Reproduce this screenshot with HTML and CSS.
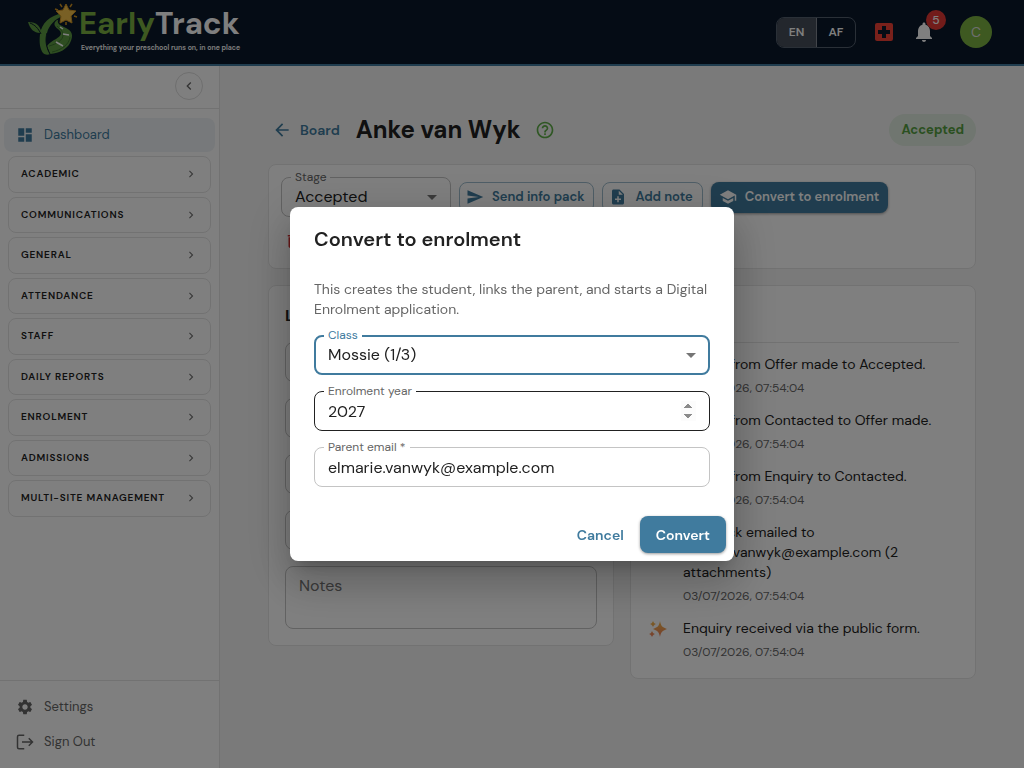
FILE: index.html
```html
<!DOCTYPE html>
<html lang="en">
<head>
  <meta charset="UTF-8">
  <meta name="viewport" content="width=device-width, initial-scale=1.0">
  <title>EarlyTrack - Anke van Wyk</title>
  <link rel="stylesheet" href="styles.css">
</head>
<body>
  <header class="topbar">
    <a class="logo" href="#" aria-label="EarlyTrack">
      <svg width="216" height="60" viewBox="0 0 216 60">
        <path d="M35 11C21 14 14 21 12 32c-1 9 0 15 3 19 2 2 5 2 7 1-4-6-5-14-3-21 2-8 8-14 16-17z" fill="#5c9b42"/>
        <path d="M14 34C13 24 9 20 0 20c2 7 6 11 12 11" fill="#5c9b42"/>
        <path d="M2 21c5 2 8 5 11 11" fill="none" stroke="#0a182a"/>
        <path d="M29 18c-4 3-3 6 1 9 5 4 3 7-2 10-4 2-7 4-9 7l3 8c10-1 17-5 20-11 4-8 2-12-4-15-6-3-9-4-8-8z" fill="#5c9b42"/>
        <path d="M19 31c-2 7-1 14 3 21" fill="none" stroke="#0a182a"/>
        <path d="M21 44c8-2 14-6 14-11 0-4-3-6-6-9M24 50c9-2 17-7 18-15" fill="none" stroke="#3c7430"/>
        <path d="M32 25l3 2M35 32l6 1M28 40l7 4" stroke="#fff" stroke-width="1.500"/>
        <path d="M38 2l3 6 7 1-5 5 1 7-6-3-6 3 1-7-5-5 7-1z" fill="#f3c04b" stroke="#cf9322"/>
        <path d="M32 2l2 3M44 2l-2 3M27 7l3 1M46 14l3 1M38 20l0 3" stroke="#cf9322" stroke-width="1.500"/>
        <text class="logo-name" x="51" y="32"><tspan fill="#7cb342">Early</tspan><tspan fill="#fff">Track</tspan></text>
        <text class="logo-tagline" x="53" y="48">Everything your preschool runs on, in one place</text>
      </svg>
    </a>
    <div class="topbar-actions">
      <div class="lang-switch">
        <button type="button" class="active">EN</button>
        <button type="button">AF</button>
      </div>
      <button type="button" class="icon-button" aria-label="Emergency">
        <svg width="24" height="24" viewBox="0 0 24 24" fill="#f44336"><path d="M19 3H5a2 2 0 0 0-2 2v14c0 1.100.9 2 2 2h14a2 2 0 0 0 2-2V5a2 2 0 0 0-2-2zm-1 11h-4v4h-4v-4H6v-4h4V6h4v4h4v4z"/></svg>
      </button>
      <button type="button" class="icon-button bell" aria-label="Notifications">
        <svg width="24" height="24" viewBox="0 0 24 24" fill="#fff"><path d="M12 22c1.100 0 2-.9 2-2h-4c0 1.100.89 2 2 2zm6-6v-5c0-3.070-1.640-5.640-4.500-6.320V4c0-.83-.67-1.500-1.500-1.500s-1.500.67-1.500 1.500v.68C7.630 5.360 6 7.920 6 11v5l-2 2v1h16v-1l-2-2z"/></svg>
        <span class="badge">5</span>
      </button>
      <button type="button" class="avatar">C</button>
    </div>
  </header>

  <div class="layout">
    <nav class="sidebar">
      <div class="sidebar-top">
        <button type="button" class="collapse" aria-label="Collapse menu">
          <svg width="16" height="16" viewBox="0 0 24 24" fill="currentColor"><path d="M15.410 7.410 14 6l-6 6 6 6 1.410-1.410L10.830 12z"/></svg>
        </button>
      </div>
      <a class="nav-link current" href="#">
        <svg width="18" height="18" viewBox="0 0 24 24" fill="currentColor"><path d="M3 13h8V3H3v10zm0 8h8v-6H3v6zm10 0h8V11h-8v10zm0-18v6h8V3h-8z"/></svg>
        Dashboard
      </a>
      <div class="nav-groups">
        <button type="button" class="nav-group">Academic<svg class="chevron" viewBox="0 0 24 24"><path d="M10 6 8.590 7.410 13.170 12l-4.580 4.590L10 18l6-6z"/></svg></button>
        <button type="button" class="nav-group">Communications<svg class="chevron" viewBox="0 0 24 24"><path d="M10 6 8.590 7.410 13.170 12l-4.580 4.590L10 18l6-6z"/></svg></button>
        <button type="button" class="nav-group">General<svg class="chevron" viewBox="0 0 24 24"><path d="M10 6 8.590 7.410 13.170 12l-4.580 4.590L10 18l6-6z"/></svg></button>
        <button type="button" class="nav-group">Attendance<svg class="chevron" viewBox="0 0 24 24"><path d="M10 6 8.590 7.410 13.170 12l-4.580 4.590L10 18l6-6z"/></svg></button>
        <button type="button" class="nav-group">Staff<svg class="chevron" viewBox="0 0 24 24"><path d="M10 6 8.590 7.410 13.170 12l-4.580 4.590L10 18l6-6z"/></svg></button>
        <button type="button" class="nav-group">Daily Reports<svg class="chevron" viewBox="0 0 24 24"><path d="M10 6 8.590 7.410 13.170 12l-4.580 4.590L10 18l6-6z"/></svg></button>
        <button type="button" class="nav-group">Enrolment<svg class="chevron" viewBox="0 0 24 24"><path d="M10 6 8.590 7.410 13.170 12l-4.580 4.590L10 18l6-6z"/></svg></button>
        <button type="button" class="nav-group">Admissions<svg class="chevron" viewBox="0 0 24 24"><path d="M10 6 8.590 7.410 13.170 12l-4.580 4.590L10 18l6-6z"/></svg></button>
        <button type="button" class="nav-group">Multi-site Management<svg class="chevron" viewBox="0 0 24 24"><path d="M10 6 8.590 7.410 13.170 12l-4.580 4.590L10 18l6-6z"/></svg></button>
      </div>
      <div class="sidebar-bottom">
        <a class="nav-link" href="#">
          <svg width="18" height="18" viewBox="0 0 24 24" fill="currentColor"><path d="M19.140 12.940c.04-.3.06-.61.06-.94 0-.32-.02-.64-.07-.94l2.030-1.580c.18-.14.23-.41.12-.61l-1.920-3.320c-.12-.22-.37-.29-.59-.22l-2.390.96c-.5-.38-1.030-.7-1.620-.94l-.36-2.540c-.04-.24-.24-.41-.48-.41h-3.840c-.24 0-.43.17-.47.41l-.36 2.540c-.59.24-1.130.57-1.620.94l-2.390-.96c-.22-.08-.47 0-.59.22L2.740 8.870c-.12.21-.08.47.12.61l2.030 1.580c-.05.3-.09.63-.09.94s.02.64.07.94l-2.030 1.580c-.18.14-.23.41-.12.61l1.920 3.320c.12.22.37.29.59.22l2.390-.96c.5.38 1.030.7 1.620.94l.36 2.540c.05.24.24.41.48.41h3.840c.24 0 .44-.17.47-.41l.36-2.540c.59-.24 1.130-.56 1.620-.94l2.390.96c.22.08.47 0 .59-.22l1.920-3.320c.12-.22.07-.47-.12-.61l-2.010-1.580zM12 15.600c-1.980 0-3.600-1.620-3.600-3.600s1.620-3.600 3.600-3.600 3.600 1.620 3.600 3.600-1.620 3.600-3.600 3.600z"/></svg>
          Settings
        </a>
        <a class="nav-link" href="#">
          <svg width="18" height="18" viewBox="0 0 24 24" fill="none" stroke="currentColor" stroke-width="2"><path d="M11 3H4a2 2 0 0 0-2 2v14a2 2 0 0 0 2 2h7M8 12h13M17 7l5 5-5 5"/></svg>
          Sign Out
        </a>
      </div>
    </nav>

    <main class="content">
      <div class="page-head">
        <a class="back" href="#">
          <svg width="20" height="20" viewBox="0 0 24 24" fill="currentColor"><path d="M20 11H7.830l5.590-5.590L12 4l-8 8 8 8 1.410-1.410L7.830 13H20v-2z"/></svg>
          Board
        </a>
        <h1>Anke van Wyk</h1>
        <button type="button" class="icon-button help" aria-label="Help">
          <svg width="20" height="20" viewBox="0 0 24 24" fill="currentColor"><path d="M11 18h2v-2h-2v2zm1-16C6.480 2 2 6.480 2 12s4.480 10 10 10 10-4.480 10-10S17.520 2 12 2zm0 18c-4.410 0-8-3.590-8-8s3.590-8 8-8 8 3.590 8 8-3.590 8-8 8zm0-14c-2.210 0-4 1.790-4 4h2c0-1.100.9-2 2-2s2 .9 2 2c0 2-3 1.750-3 5h2c0-2.250 3-2.500 3-5 0-2.210-1.790-4-4-4z"/></svg>
        </button>
        <span class="status">Accepted</span>
      </div>

      <section class="card toolbar">
        <div class="field stage">
          <label for="stage">Stage</label>
          <select id="stage"><option>Accepted</option></select>
          <svg class="caret" viewBox="0 0 24 24"><path d="m7 10 5 5 5-5z"/></svg>
        </div>
        <button type="button" class="btn outlined">
          <svg width="18" height="18" viewBox="0 0 24 24" fill="currentColor"><path d="M2.010 21 23 12 2.010 3 2 10l15 2-15 2z"/></svg>
          Send info pack
        </button>
        <button type="button" class="btn outlined">
          <svg width="18" height="18" viewBox="0 0 24 24" fill="currentColor"><path d="M14 2H6c-1.100 0-2 .9-2 2v16c0 1.100.89 2 2 2h12c1.100 0 2-.9 2-2V8l-6-6zm2 14h-3v3h-2v-3H8v-2h3v-3h2v3h3v2zm-3-7V3.500L18.500 9H13z"/></svg>
          Add note
        </button>
        <button type="button" class="btn contained">
          <svg width="18" height="18" viewBox="0 0 24 24" fill="currentColor"><path d="M5 13.180v4L12 21l7-3.820v-4L12 17l-7-3.820zM12 3 1 9l11 6 9-4.910V17h2V9L12 3z"/></svg>
          Convert to enrolment
        </button>
        <button type="button" class="btn danger">
          <svg width="18" height="18" viewBox="0 0 24 24" fill="currentColor"><path d="M6 19c0 1.100.9 2 2 2h8c1.100 0 2-.9 2-2V7H6v12zM8 9h8v10H8V9zm7.500-5-1-1h-5l-1 1H5v2h14V4h-3.500z"/></svg>
          Delete
        </button>
      </section>

      <div class="columns">
        <section class="card details">
          <h2>Lead details</h2>
          <div class="field"><input type="text" aria-label="Child name" value="Anke van Wyk"></div>
          <div class="field"><input type="text" aria-label="Parent name"></div>
          <div class="field"><input type="email" aria-label="Email" value="elmarie.vanwyk@example.com"></div>
          <div class="field"><input type="tel" aria-label="Phone"></div>
          <div class="field"><textarea aria-label="Notes" placeholder="Notes"></textarea></div>
        </section>

        <section class="card timeline">
          <h2>Timeline</h2>
          <ul>
            <li><span class="event-icon"></span><div><p>Moved from Offer made to Accepted.</p><time>03/07/2026, 07:54:04</time></div></li>
            <li><span class="event-icon"></span><div><p>Moved from Contacted to Offer made.</p><time>03/07/2026, 07:54:04</time></div></li>
            <li><span class="event-icon"></span><div><p>Moved from Enquiry to Contacted.</p><time>03/07/2026, 07:54:04</time></div></li>
            <li><span class="event-icon"></span><div><p>Info pack emailed to elmarie.vanwyk@example.com (2 attachments)</p><time>03/07/2026, 07:54:04</time></div></li>
            <li>
              <span class="event-icon">
                <svg width="20" height="20" viewBox="0 0 20 20">
                  <defs><linearGradient id="spark" x1="0" y1="0" x2="0" y2="1"><stop offset="0" stop-color="#f5b947"/><stop offset="1" stop-color="#ef7f5c"/></linearGradient></defs>
                  <path d="M11 1c1 5 2 6 7 8-5 2-6 3-7 8-1-5-2-6-7-8 5-2 6-3 7-8zM4 1c1 2 1 2 3 3-2 1-2 1-3 3C3 5 3 5 1 4c2-1 2-1 3-3zM3 11c1 2 1 2 3 3-2 1-2 1-3 3-1-2-1-2-3-3 2-1 2-1 3-3z" fill="url(#spark)"/>
                </svg>
              </span>
              <div><p>Enquiry received via the public form.</p><time>03/07/2026, 07:54:04</time></div>
            </li>
          </ul>
        </section>
      </div>
    </main>
  </div>

  <div class="backdrop">
    <form class="dialog" role="dialog" aria-modal="true" aria-labelledby="dialog-title">
      <h2 id="dialog-title">Convert to enrolment</h2>
      <div class="dialog-body">
        <p>This creates the student, links the parent, and starts a Digital Enrolment application.</p>
        <div class="field focused">
          <label for="class">Class</label>
          <select id="class"><option>Mossie (1/3)</option></select>
          <svg class="caret" viewBox="0 0 24 24"><path d="m7 10 5 5 5-5z"/></svg>
        </div>
        <div class="field hovered">
          <label for="year">Enrolment year</label>
          <input type="number" id="year" value="2027">
        </div>
        <div class="field">
          <label for="email">Parent email *</label>
          <input type="email" id="email" value="elmarie.vanwyk@example.com" required>
        </div>
      </div>
      <div class="dialog-actions">
        <button type="button" class="btn text">Cancel</button>
        <button type="button" class="btn contained">Convert</button>
      </div>
    </form>
  </div>
</body>
</html>
```

FILE: styles.css
```css
* {
  box-sizing: border-box;
}

body {
  font-family: "DM Sans", Inter, "Open Sans", sans-serif;
  font-size: 14px;
  line-height: 20px;
  background-color: #f5f5f5;
  color: #212121;
  margin: 0;
  height: 100vh;
  display: flex;
  flex-direction: column;
  overflow: hidden;
}

button, input, select, textarea {
  font: inherit;
  color: inherit;
}

button {
  background: none;
  border: none;
  padding: 0;
  cursor: pointer;
}

a {
  color: inherit;
  text-decoration: none;
}

h1, h2, p, ul {
  margin: 0;
  padding: 0;
}

svg {
  flex-shrink: 0;
}

/* Top bar */
.topbar {
  background-color: #0a182a;
  border-bottom: 2px solid #407b9e;
  height: 66px;
  padding: 0 32px 0 28px;
  display: flex;
  align-items: center;
  justify-content: space-between;
}

.logo {
  display: flex;
}

.logo svg {
  overflow: visible;
}

.logo-name {
  font-size: 31px;
  font-weight: 700;
}

.logo-tagline {
  font-size: 7px;
  font-weight: 600;
  fill: #fff;
}

.topbar-actions {
  display: flex;
  align-items: center;
}

.lang-switch {
  display: flex;
  border: 1px solid #54606f;
  border-radius: 8px;
  overflow: hidden;
  margin-right: 16px;
}

.lang-switch button {
  width: 38px;
  height: 29px;
  font-size: 12px;
  font-weight: 600;
  color: #fff;
}

.lang-switch .active {
  width: 40px;
  background-color: #474f5a;
  border-right: 1px solid #848b94;
}

.icon-button {
  display: flex;
}

.bell {
  position: relative;
  margin: 0 24px 0 16px;
}

.badge {
  position: absolute;
  top: -10px;
  right: -10px;
  width: 20px;
  height: 20px;
  border-radius: 10px;
  background-color: #e53935;
  color: #fff;
  font-size: 12px;
  font-weight: 500;
  text-align: center;
}

.avatar {
  width: 32px;
  height: 32px;
  border-radius: 50%;
  background-color: #7cb342;
  color: #dedede;
}

/* Sidebar */
.layout {
  display: flex;
  flex: 1;
  min-height: 0;
}

.sidebar {
  width: 220px;
  flex-shrink: 0;
  background-color: #fff;
  border-right: 1px solid #e5e5e5;
  display: flex;
  flex-direction: column;
}

.sidebar-top {
  display: flex;
  justify-content: flex-end;
  padding: 6px 16px 8px;
  border-bottom: 1px solid #e5e5e5;
}

.collapse {
  width: 28px;
  height: 28px;
  border: 1px solid #ddd;
  border-radius: 50%;
  color: #666;
  display: flex;
  align-items: center;
  justify-content: center;
}

.nav-link {
  display: flex;
  align-items: center;
  gap: 10px;
  margin: 0 4px;
  padding: 7px 12px;
  border-radius: 8px;
  color: #666;
  font-size: 13px;
}

.nav-link.current {
  margin-top: 9px;
  background-color: #eff3f6;
  color: #407b9e;
}

.nav-groups {
  display: flex;
  flex-direction: column;
  gap: 4px;
  padding: 4px 8px;
}

.nav-group {
  display: flex;
  align-items: center;
  justify-content: space-between;
  padding: 9px 12px;
  border: 1px solid #e5e5e5;
  border-radius: 8px;
  font-size: 10px;
  font-weight: 600;
  line-height: 1.65;
  letter-spacing: 0.08em;
  text-transform: uppercase;
}

.chevron {
  width: 14px;
  height: 14px;
  fill: #757575;
}

.sidebar-bottom {
  margin-top: auto;
  border-top: 1px solid #e5e5e5;
  padding: 9px 0;
  display: flex;
  flex-direction: column;
  gap: 1px;
}

/* Page */
.content {
  flex: 1;
  padding: 48px;
}

.page-head {
  display: flex;
  align-items: center;
  height: 32px;
  margin-bottom: 18px;
}

.back {
  display: flex;
  align-items: center;
  gap: 8px;
  padding: 0 16px 0 4px;
  color: #407b9e;
  font-weight: 600;
}

h1 {
  font-size: 24px;
  font-weight: 700;
  line-height: 32px;
}

.help {
  margin-left: 14px;
  color: #5fae48;
}

.status {
  margin-left: auto;
  padding: 6px 12px;
  border-radius: 16px;
  background-color: #e1ece0;
  color: #55a040;
  font-size: 13px;
  font-weight: 700;
}

.card {
  background-color: #fff;
  border: 1px solid #e5e5e5;
  border-radius: 8px;
  padding: 16px;
}

.toolbar {
  display: flex;
  flex-wrap: wrap;
  align-items: center;
  gap: 8px;
  padding: 12px;
  margin-bottom: 16px;
}

.btn {
  display: flex;
  align-items: center;
  gap: 8px;
  height: 31px;
  padding: 0 9px 0 8px;
  border-radius: 8px;
  font-size: 13px;
  font-weight: 600;
  color: #407b9e;
}

.outlined {
  padding: 0 9px 0 6px;
  border: 1px solid #9fbdce;
}

.contained {
  background-color: #407b9e;
  color: #fff;
  box-shadow: 0 1px 3px rgba(0, 0, 0, 0.4);
}

.danger {
  padding: 0 3px;
  color: #d32f2f;
}

.columns {
  display: grid;
  grid-template-columns: 1fr 1fr;
  align-items: start;
  gap: 16px;
}

.card h2 {
  font-size: 16px;
  font-weight: 700;
  line-height: 28px;
}

/* Form fields */
.field {
  position: relative;
  display: flex;
}

.field label {
  position: absolute;
  top: -8px;
  left: 10px;
  padding: 0 4px;
  background-color: #fff;
  color: #666;
  font-size: 12px;
  line-height: 16px;
}

.field input, .field select, .field textarea {
  width: 100%;
  height: 40px;
  padding: 0 13px;
  border: 1px solid #c4c4c4;
  border-radius: 8px;
  background-color: #fff;
  font-size: 16px;
  appearance: none;
  outline: none;
}

.field textarea {
  display: block;
  height: 63px;
  padding: 9px 13px;
  resize: none;
}

.field textarea::placeholder {
  color: #757575;
}

.field input[type="number"]::-webkit-inner-spin-button {
  opacity: 1;
}

.field.hovered input {
  border-color: #212121;
}

.field.focused select {
  padding: 0 12px;
  border: 2px solid #407b9e;
}

.field.focused label {
  color: #407b9e;
}

.caret {
  position: absolute;
  top: 8px;
  right: 7px;
  width: 24px;
  height: 24px;
  fill: #757575;
  pointer-events: none;
}

.stage {
  width: 170px;
}

.details {
  display: flex;
  flex-direction: column;
  gap: 16px;
}

.details h2 {
  margin-bottom: -4px;
}

/* Timeline */
.timeline h2 {
  padding-bottom: 12px;
  border-bottom: 1px solid #e5e5e5;
}

.timeline ul {
  list-style: none;
  display: flex;
  flex-direction: column;
  gap: 12px;
  padding: 11px 0 0;
}

.timeline li {
  display: flex;
  gap: 14px;
}

.event-icon {
  width: 22px;
  flex-shrink: 0;
  padding: 2px 0 0 2px;
}

.timeline time {
  display: block;
  margin-top: 4px;
  font-size: 12px;
  color: #666;
}

/* Dialog */
.backdrop {
  position: fixed;
  inset: 0;
  background-color: rgba(0, 0, 0, 0.5);
  display: flex;
  align-items: center;
  justify-content: center;
}

.dialog {
  width: 100%;
  max-width: 444px;
  background-color: #fff;
  border-radius: 8px;
  box-shadow: 0 11px 15px -7px rgba(0, 0, 0, 0.2), 0 24px 38px 3px rgba(0, 0, 0, 0.14), 0 9px 46px 8px rgba(0, 0, 0, 0.12);
}

.dialog h2 {
  padding: 16px 24px;
  font-size: 20px;
  font-weight: 600;
  line-height: 32px;
}

.dialog-body {
  display: flex;
  flex-direction: column;
  gap: 16px;
  padding: 8px 24px 21px;
}

.dialog-body p {
  color: #666;
}

.dialog-actions {
  display: flex;
  justify-content: flex-end;
  gap: 8px;
  padding: 8px;
}

.dialog-actions .btn {
  height: 37px;
  padding: 0 8px;
  font-size: 14px;
}

.dialog-actions .contained {
  padding: 0 16px;
}
```
